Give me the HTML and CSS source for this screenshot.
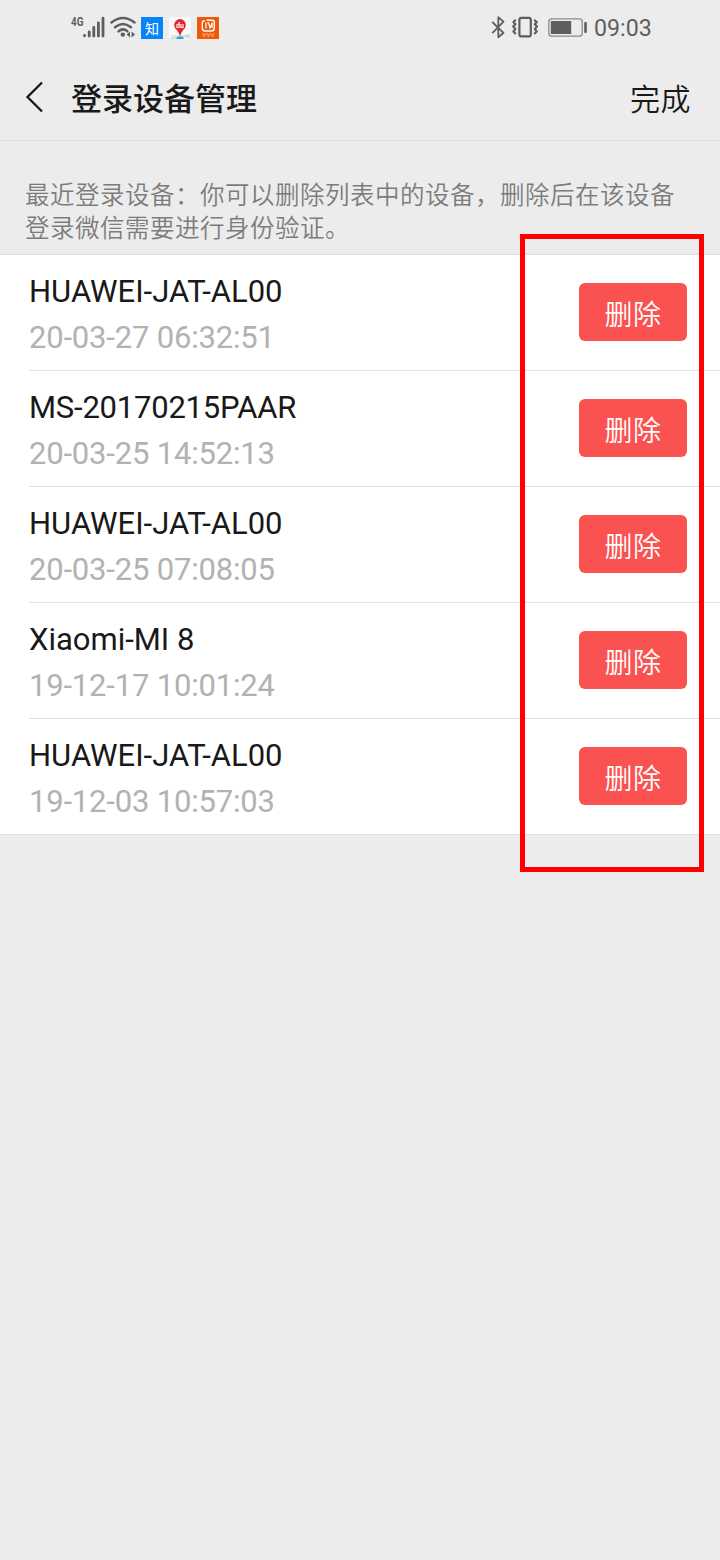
FILE: index.html
```html
<!DOCTYPE html>
<html lang="zh-CN">
<head>
<meta charset="utf-8">
<title>登录设备管理</title>
<link rel="stylesheet" href="styles.css">
</head>
<body>
<div class="status">
  <svg class="status-left" width="152" height="40" viewBox="68 8 152 40">
    <text class="net" x="71" y="26" textLength="12.5" lengthAdjust="spacingAndGlyphs">4G</text>
    <g stroke="#5e5e5e" stroke-width="2.8" stroke-linecap="round" fill="none">
      <path d="M84.5 35.4v.4M89.2 32v4M93.8 27.3v8.7M98.4 22.8v13.2M103 18.2V36"/>
      <path d="M111.5 22.5Q123 13.5 134.5 22.5M115 27.2Q123 20.8 131 27.2M118.5 31.4Q123 27.5 127.3 31.2" stroke-width="2.5"/>
    </g>
    <circle cx="122.8" cy="34.6" r="2.2" fill="#5e5e5e"/>
    <path d="M130 31.5v6l-3.4-3zM131.6 31.5v6l3.4-3z" fill="#5e5e5e"/>
    <rect x="141" y="17" width="22" height="22" fill="#0884f8"/>
    <text class="zhi" x="152" y="33.5" text-anchor="middle">知</text>
    <rect x="169" y="17" width="22" height="22" rx="3" fill="#fafafa"/>
    <path d="M170 38l6-3 4 4h-9zM184 35l6-1v4h-4z" fill="#bfe5c4"/>
    <path d="M171 34l5 2 8-1 6 3h-18z" fill="#cfe8ef"/>
    <path d="M177.5 36.5h5l1.5 2.5h-8z" fill="#4498dc"/>
    <path d="M180 36.5q-1-4-3.8-7.2a5.8 5.8 0 1 1 7.6 0Q181 32.5 180 36.5z" fill="#e4242c"/>
    <text class="du" x="180" y="27.5" text-anchor="middle">du</text>
    <rect x="197" y="17" width="22" height="22" fill="#ee590b"/>
    <g fill="none" stroke="#fff" stroke-width="1.4">
      <path d="M206.5 20.2h6q1.8 0 1.8 1.8v6q0 3-2.8 3h-6.5q-2.7 0-2.7-2.7v-5.1q0-2.4 2.4-2.4"/>
      <path d="M206 22.5v6.1M207.5 22.8h1l1.6 5.2 2-5.4v5.5" stroke-width="1.2"/>
    </g>
    <path d="M202 33.2l2.3 2 2-2 2 2 2-2 2 2 2.2-2M202.5 36h3m2 0h2.5m1.5 0h2.5" fill="none" stroke="#ffc49c" stroke-width=".9"/>
  </svg>
  <div class="status-right">
    <svg width="100" height="40" viewBox="488 8 100 40">
      <g fill="none" stroke="#5e5e5e" stroke-width="1.8" stroke-linejoin="round">
        <path d="M492.3 22l11.2 10.8-5.2 4.4V17.2l5.2 4.4L492.3 33.2"/>
        <rect x="519.4" y="17.8" width="11.4" height="18.6" rx="2" stroke-width="2.2"/>
        <path d="M515.8 19.8l-2.4 2.2 2 2.2-2.2 2.4 2.2 2.4-2 2.4 2.4 2.6M534.2 19.8l2.6 2.2-2 2.2 2.2 2.4-2.2 2.4 2 2.4-2.6 2.6" stroke-width="2.2"/>
        <rect x="548.8" y="18.8" width="33.4" height="17.4" rx="3" stroke="#8b8b8b" stroke-width="1.3"/>
      </g>
      <rect x="550.8" y="21" width="20.4" height="13" fill="#5e5e5e"/>
      <rect x="584.2" y="22" width="2.6" height="11" rx="1" fill="#5e5e5e"/>
    </svg>
    <span class="clock">09:03</span>
  </div>
</div>
<header class="nav">
  <svg class="back" width="20" height="34" viewBox="0 0 20 34"><path d="M17 2.5L2.5 17 17 31.5" fill="none" stroke="#191919" stroke-width="2.3"/></svg>
  <h1 class="title">登录设备管理</h1>
  <span class="done">完成</span>
</header>
<p class="tip">最近登录设备：你可以删除列表中的设备，删除后在该设备登录微信需要进行身份验证。</p>
<main class="list">
  <div class="row"><div><div class="name">HUAWEI-JAT-AL00</div><div class="time">20-03-27 06:32:51</div></div><button class="delete">删除</button></div>
  <div class="row"><div><div class="name numeric">MS-20170215PAAR</div><div class="time">20-03-25 14:52:13</div></div><button class="delete">删除</button></div>
  <div class="row"><div><div class="name">HUAWEI-JAT-AL00</div><div class="time">20-03-25 07:08:05</div></div><button class="delete">删除</button></div>
  <div class="row"><div><div class="name">Xiaomi-MI 8</div><div class="time">19-12-17 10:01:24</div></div><button class="delete">删除</button></div>
  <div class="row"><div><div class="name">HUAWEI-JAT-AL00</div><div class="time">19-12-03 10:57:03</div></div><button class="delete">删除</button></div>
</main>
<div class="highlight"></div>
</body>
</html>
```
FILE: styles.css
```css
* { box-sizing: border-box; }
body {
  margin: 0;
  min-height: 1560px;
  position: relative;
  background: #ececec;
  color: #191919;
  font-family: Roboto, "Noto Sans CJK SC", sans-serif;
}
svg { display: block; flex: none; }
.status {
  height: 56px;
  padding: 8px 69px 8px 68px;
  display: flex;
  justify-content: space-between;
}
.status-right { display: flex; align-items: center; gap: 6px; }
.clock { width: 57px; font-size: 23.2px; line-height: 40px; color: #5e5e5e; white-space: nowrap; }
.net { font: bold 13px Roboto, sans-serif; fill: #5e5e5e; }
.zhi { font: 14px "Noto Sans CJK SC", sans-serif; fill: #fff; }
.du { font: bold 7px Roboto, sans-serif; fill: #fff; }
.nav {
  height: 85px;
  padding: 0 29px 0 25px;
  display: flex;
  align-items: center;
  border-bottom: 1px solid #e0e0e0;
}
.back { margin-bottom: 2px; }
.title { margin: 0 auto 0 26px; padding-top: 4px; font-size: 31px; line-height: 44px; font-weight: 500; }
.done { padding-bottom: 2px; font-size: 30px; letter-spacing: .5px; line-height: 44px; font-weight: 350; font-family: "Noto Sans CJK SC DemiLight", "Noto Sans CJK SC", sans-serif; }
.tip {
  margin: 0;
  height: 114px;
  padding: 36px 40px 0 25px;
  border-bottom: 1px solid #e0e0e0;
  font-size: 24.5px;
  letter-spacing: .5px;
  line-height: 33px;
  font-weight: 350;
  font-family: "Noto Sans CJK SC DemiLight", "Noto Sans CJK SC", sans-serif;
  color: #7c7c7c;
}
.list { background: #fff; border-bottom: 1px solid #e0e0e0; }
.row {
  height: 116px;
  margin-left: 29px;
  padding: 14px 33px 0 0;
  display: flex;
  justify-content: space-between;
  align-items: flex-start;
  border-bottom: 1px solid #e0e0e0;
}
.row:last-child { height: 115px; border-bottom: 0; }
.name, .time { font-size: 31px; line-height: 46px; white-space: nowrap; }
.name.numeric { letter-spacing: -.22px; }
.time { color: #b2b2b2; letter-spacing: -.18px; }
.delete {
  width: 108px;
  height: 58px;
  margin-top: 14px;
  padding: 2px 0 0;
  border: 0;
  border-radius: 6px;
  background: #fa5151;
  color: #fff;
  font: 350 28px/56px "Noto Sans CJK SC DemiLight", "Noto Sans CJK SC", sans-serif;
  letter-spacing: .5px;
}
.highlight {
  position: absolute;
  left: 520px;
  top: 234px;
  width: 184px;
  height: 638px;
  border: 5px solid #f00;
}
```
